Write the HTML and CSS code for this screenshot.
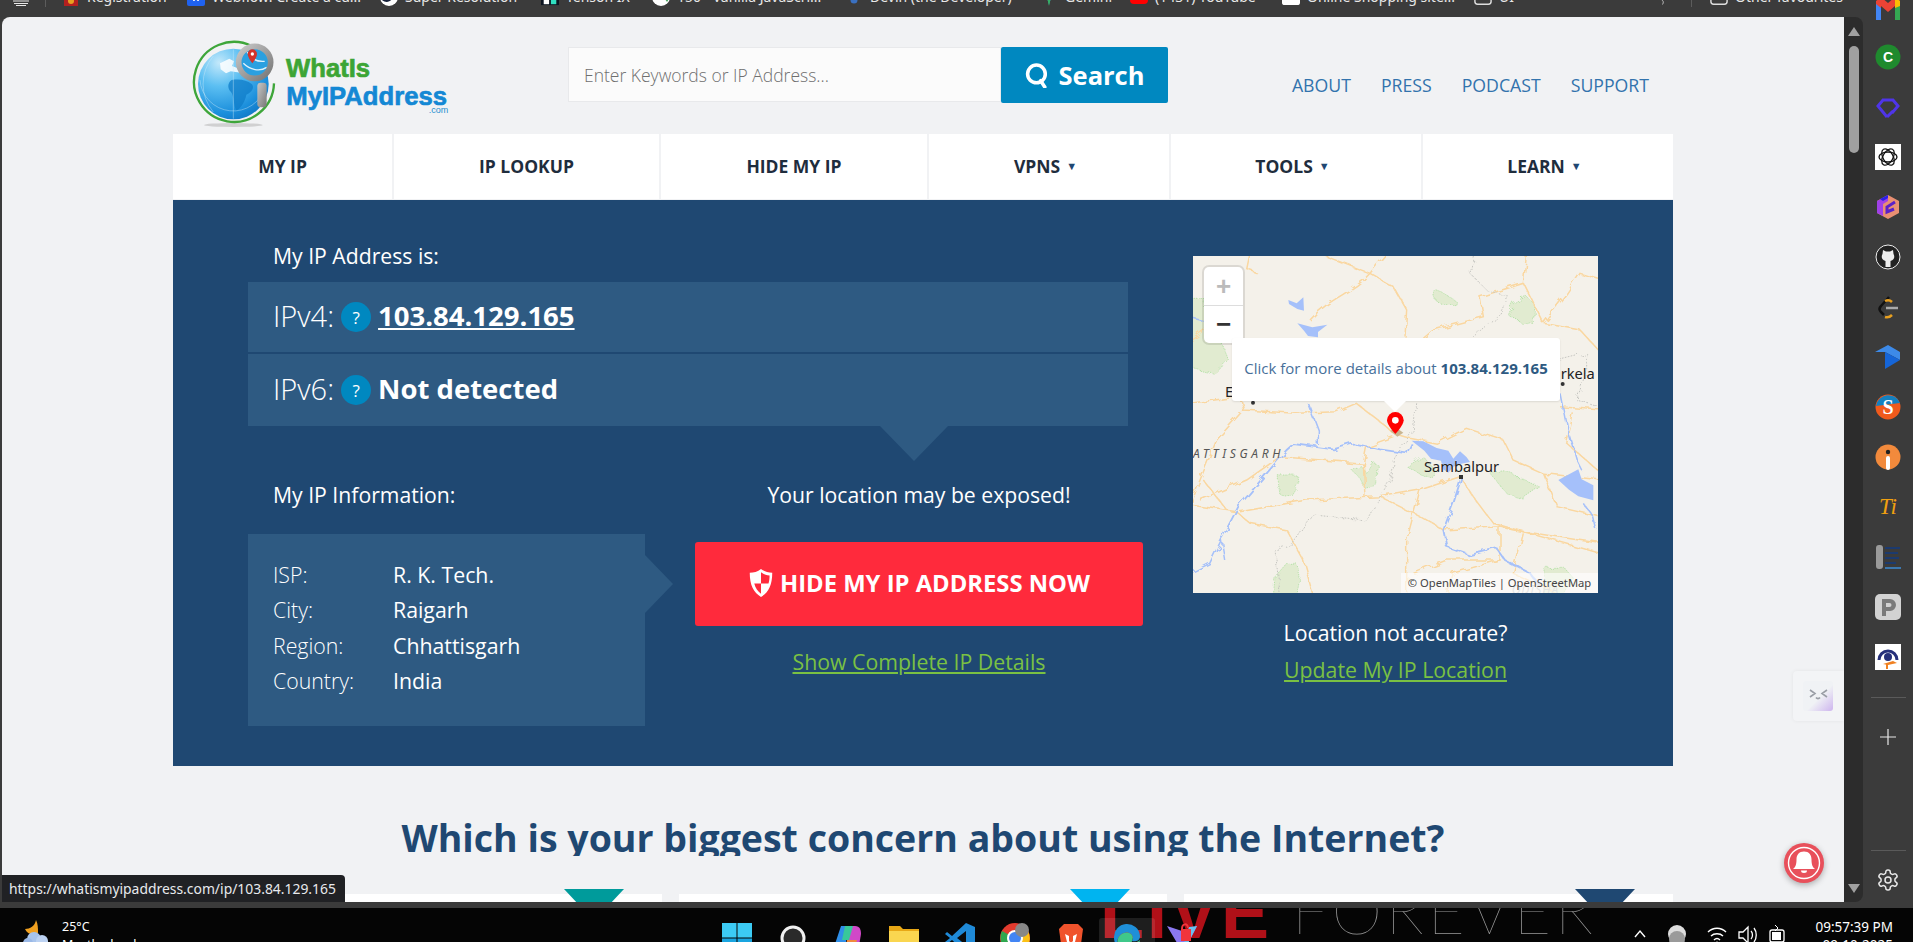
FILE: index.html
```html
<!DOCTYPE html>
<html lang="en">
<head>
<meta charset="utf-8">
<title>What Is My IP Address</title>
<link rel="stylesheet" href="styles.css">
</head>
<body>
<div class="browser">
  <div class="main">
    <div class="bookmarks">
      <svg class="bm-menu" viewBox="0 0 16 6"><path d="M0 1h16M1 3.500h14M3 5.500h10" stroke="#e8e8e8" stroke-width="1.200" fill="none"/></svg>
      <span class="bm-sep"></span>
      <div class="bm"><svg class="bm-icon" viewBox="0 0 18 18"><rect x="2" width="14" height="18" fill="#b3201f"/><circle cx="9" cy="13" r="3" fill="#e8a020"/></svg><span>Registration</span></div>
      <div class="bm"><svg class="bm-icon" viewBox="0 0 18 18"><rect width="18" height="18" rx="2" fill="#1f62f0"/><path d="M4 8l3 5 2-4 2 4 3-5" stroke="#fff" fill="none"/></svg><span>Webflow: Create a cu...</span></div>
      <div class="bm"><svg class="bm-icon" viewBox="0 0 18 18"><circle cx="9" cy="9" r="9" fill="#fff"/><path d="M3 11c4 3 8 1 9-4" stroke="#16213a" stroke-width="3" fill="none"/></svg><span>Super Resolution</span></div>
      <div class="bm"><svg class="bm-icon" viewBox="0 0 20 18"><rect width="20" height="18" fill="#0b1420"/><rect x="3" y="8" width="6" height="9" fill="#fff"/><rect x="11" y="8" width="6" height="9" fill="#30e0c0"/></svg><span>Tenson IX</span></div>
      <div class="bm"><svg class="bm-icon" viewBox="0 0 18 18"><circle cx="9" cy="9" r="9" fill="#fff"/><path d="M6 0l9 14 3-5V0z" fill="#3f9f58"/></svg><span>150+ Vanilla JavaScri...</span></div>
      <div class="bm"><svg class="bm-icon" viewBox="0 0 18 18"><circle cx="5" cy="5" r="3" fill="#4f8fd0"/><circle cx="13" cy="5" r="3" fill="#6aa88a"/><circle cx="9" cy="12" r="3.500" fill="#3a70c0"/></svg><span>Devin (the Developer)</span></div>
      <div class="bm"><svg class="bm-icon" viewBox="0 0 18 18"><path d="M9 0c1 5 3 7 7 8-4 1-6 3-7 9-1-6-3-8-7-9 4-1 6-3 7-8z" fill="#3f9fd0"/><path d="M9 9l2 0-2 9-2-9z" fill="#36b060"/></svg><span>Gemini</span></div>
      <div class="bm"><svg class="bm-icon" viewBox="0 0 18 18"><rect y="2" width="18" height="14" rx="4" fill="#f00"/></svg><span>(1431) YouTube</span></div>
      <div class="bm"><svg class="bm-icon" viewBox="0 0 20 18"><rect width="20" height="18" rx="3" fill="#fff"/><path d="M4 9c3 3 9 3 12 0" stroke="#f08a10" stroke-width="2" fill="none"/></svg><span>Online Shopping site...</span></div>
      <div class="bm bm-ui"><svg class="bm-icon" viewBox="0 0 20 18"><path d="M1 0v14a3 3 0 0 0 3 3h12a3 3 0 0 0 3-3V0" stroke="#ddd" stroke-width="1.600" fill="none"/></svg><span>UI</span></div>
      <svg class="bm-chev" viewBox="0 0 8 8"><path d="M1 0c2 1 3 3 1 6" stroke="#ddd" fill="none"/></svg>
      <span class="bm-sep bm-sep-end"></span>
      <div class="bm"><svg class="bm-icon" viewBox="0 0 20 18"><path d="M1 0v14a3 3 0 0 0 3 3h12a3 3 0 0 0 3-3V0" stroke="#ddd" stroke-width="1.600" fill="none"/></svg><span>Other favourites</span></div>
    </div>
    <div class="viewport">
      <div class="page">
        <div class="container">
          <header class="site-header">
            <svg class="logo" viewBox="0 0 900 360" role="img" aria-label="WhatIsMyIPAddress.com">
              <defs>
                <radialGradient id="globeFill" cx="0.3" cy="0.2" r="0.95"><stop offset="0" stop-color="#c4e9fb"/><stop offset="0.35" stop-color="#5cbff2"/><stop offset="0.75" stop-color="#1b8fdc"/><stop offset="1" stop-color="#0d6ebd"/></radialGradient>
                <linearGradient id="ringFill" x1="0" y1="0" x2="1" y2="1"><stop offset="0" stop-color="#c8c8c8"/><stop offset="1" stop-color="#777"/></linearGradient>
              </defs>
              <ellipse cx="190" cy="315" rx="88" ry="6" fill="#b5b5b5" opacity="0.55"/>
              <path d="M245 78A120 120 0 1 0 312 190" fill="none" stroke="#3ea63a" stroke-width="7"/>
              <circle cx="190" cy="192" r="106" fill="url(#globeFill)"/>
              <path d="M150 130l28-14 14 8-6 14 22 8 4 12-30-4-14 6-16-12z" fill="#fff" opacity="0.85"/>
              <path d="M185 180c25-4 45 0 60 12 10 10 0 26-16 32-4 22-18 42-30 48-10-20-6-42-16-56-10-10-12-26 2-36z" fill="#0f7cc8" opacity="0.75"/>
              <path d="M90 180a100 100 0 0 0 196 20M130 108a130 130 0 0 0 0 168M190 88v208" stroke="#d5eefa" stroke-width="2" fill="none" opacity="0.6"/>
              <circle cx="254" cy="127" r="42" fill="#2ba0e0"/>
              <path d="M220 130c20 20 50 26 70 12M232 96c10 20 30 30 52 28" stroke="#dff2fc" stroke-width="4" fill="none"/>
              <circle cx="254" cy="127" r="48" fill="none" stroke="url(#ringFill)" stroke-width="17"/>
              <rect x="262" y="188" width="28" height="74" rx="10" fill="url(#ringFill)"/>
              <path d="M247 88a14 14 0 0 1 14 14c0 10-14 28-14 28s-14-18-14-28a14 14 0 0 1 14-14z" fill="#d3332b"/>
              <circle cx="247" cy="102" r="5" fill="#fff"/>
              <text class="logo-word logo-green" x="348" y="172">WhatIs</text>
              <text class="logo-word logo-blue" x="349" y="255">MyIPAddress</text>
              <text class="logo-com" x="835" y="279" text-anchor="end">.com</text>
            </svg>
            <form class="search">
              <div class="search-input">Enter Keywords or IP Address...</div>
              <div class="search-btn">
                <svg class="search-glass" viewBox="0 0 24 24"><circle cx="11" cy="10.500" r="8.500" fill="none" stroke="#fff" stroke-width="3.400"/><path d="M15 17l4 6" stroke="#fff" stroke-width="3.400" stroke-linecap="round"/></svg>
                <span>Search</span>
              </div>
            </form>
            <nav class="top-links">
              <a>ABOUT</a><a>PRESS</a><a>PODCAST</a><a>SUPPORT</a>
            </nav>
          </header>
          <nav class="main-nav">
            <a class="nav-myip">MY IP</a>
            <a class="nav-lookup">IP LOOKUP</a>
            <a class="nav-hide">HIDE MY IP</a>
            <a class="nav-vpns">VPNS<i class="caret">▼</i></a>
            <a class="nav-tools">TOOLS<i class="caret">▼</i></a>
            <a class="nav-learn">LEARN<i class="caret">▼</i></a>
          </nav>
          <section class="hero">
            <div class="hero-left">
              <div class="hero-title">My IP Address is:</div>
              <div class="ip-panel">
                <div class="ip-row">
                  <span class="ip-label">IPv4:</span><span class="qmark">?</span><a class="ip-value ip-link">103.84.129.165</a>
                </div>
                <div class="ip-row ip-row-last">
                  <span class="ip-label">IPv6:</span><span class="qmark">?</span><span class="ip-value">Not detected</span>
                </div>
              </div>
              <div class="hero-lower">
                <div class="info-col">
                  <div class="hero-title">My IP Information:</div>
                  <dl class="info-box">
                    <dt>ISP:</dt><dd>R. K. Tech.</dd>
                    <dt>City:</dt><dd>Raigarh</dd>
                    <dt>Region:</dt><dd>Chhattisgarh</dd>
                    <dt>Country:</dt><dd>India</dd>
                  </dl>
                </div>
                <div class="cta-col">
                  <div class="hero-title hero-title-center">Your location may be exposed!</div>
                  <a class="hide-btn">
                    <svg class="shield" viewBox="0 0 24 28"><path d="M12 1c3 2.500 7 3.500 10.500 3.500C22.500 16 19 23 12 27 5 23 1.500 16 1.500 4.500 5 4.500 9 3.500 12 1z" fill="#fff"/><path d="M12 4c2.500 1.800 5 2.600 8 3 0 3-.4 5.500-1 7.500h-7zM12 14.500v9.500c-3-2-5.200-5.300-6.300-9.500z" fill="#ff2a3c"/></svg>
                    <span>HIDE MY IP ADDRESS NOW</span>
                  </a>
                  <a class="green-link details-link">Show Complete IP Details</a>
                </div>
              </div>
            </div>
            <div class="hero-right">
              <div class="map">
                <svg class="map-art" viewBox="39 48 1215 1011" aria-hidden="true">
                  <defs>
                    <filter id="wiggle" x="-5%" y="-5%" width="110%" height="110%"><feTurbulence type="fractalNoise" baseFrequency="0.035" numOctaves="2" seed="4"/><feDisplacementMap in="SourceGraphic" scale="22"/></filter>
                  </defs>
                  <rect x="39" y="48" width="1215" height="1011" fill="#f4f1ea"/>
                  <g class="m-green" filter="url(#wiggle)">
                    <path d="M30 178h45l5 80 45 50 20 50-40 45-75-20z"/>
                    <path d="M765 150l25 10 40 25-5 15-30-10-30-10z"/>
                    <path d="M1000 190l35-25 30 30-5 50-30 10-15-15-30-15z"/>
                    <path d="M295 705l55 0 5 25-25 40-30-5-5-35z"/>
                    <path d="M515 690l30-10 15 20 20-30 15 5-5 60-35 10-15-30z"/>
                    <path d="M680 680l50-30 45 50-40 10z"/>
                    <path d="M930 700l50-5 100 45-50 35-50-15z"/>
                    <path d="M285 1010l35-40 30 0 10 40-10 59h-70z"/>
                    <path d="M1095 985l60 0 25 30-30 54h-55z"/>
                  </g>
                  <g class="m-road" filter="url(#wiggle)">
                    <path d="M440 50l130 50 70 40 40 70-5 80"/>
                    <path d="M570 100c-50 60-120 70-180 140"/>
                    <path d="M620 40l-50 60"/>
                    <path d="M1040 40l-10 90-130 40 10 60-150 40-30 25"/>
                    <path d="M1030 130l60 120 70-90 40-60 64 20"/>
                    <path d="M1090 250l110 20 64 70"/>
                    <path d="M210 40l-10 48 30 10"/>
                    <path d="M30 490l149-20 10 40 160 10 120-5 60-25 90 70 20 20 50 15 80 15 90-45 110 35 30 60 90 40 174 20"/>
                    <path d="M190 510l-80 90-50 120-30 80"/>
                    <path d="M30 795l140 20 40 35 110 20 50 90 30 109"/>
                    <path d="M300 650l250 20 10-50 80-30"/>
                    <path d="M60 780l140-60 100-70"/>
                    <path d="M180 815l200-35 220-10 120-20 120-40 40 60 60 80 320 90"/>
                    <path d="M720 750l-40 150v169"/>
                    <path d="M600 770l120 60 70 40 170-10 40 10 260 40"/>
                    <path d="M550 670l5 100"/>
                    <path d="M960 860v100H800l-100 40"/>
                    <path d="M1140 500l124 10M1180 520l-20 90 104 90"/>
                    <path d="M800 1069l20-70 140-40"/>
                    <path d="M30 300l70-50 70 50"/>
                    <path d="M70 720l70 90M1090 700l40 100 130 30"/>
                    <path d="M1030 880l-30 120 130 60"/>
                  </g>
                  <g class="m-border" filter="url(#wiggle)">
                    <path d="M880 48l-10 52 50 50 65 20-25 50-80 70"/>
                    <path d="M710 490l-10 80-60 90-10 60-30 50-40 70-160-15-60 85-55 20 15 129"/>
                    <path d="M1140 360l80-20 0 50-30 90 64 20"/>
                  </g>
                  <g class="m-river" filter="url(#wiggle)">
                    <path d="M30 1000l59-30 35-70 10 60"/>
                    <path class="m-river-wide" d="M125 895l50-95 85-100 60-70 20-18 60 8 60 8 60-18 80 18 80 12 15-30"/>
                    <path class="m-river-wide" d="M845 710l-25 80-30 80 10 50 70 25 80-20 25 35 75 40 30 40"/>
                    <path d="M385 490l30 80v45"/>
                    <path d="M1140 460l20 100 30 100 15 30M1210 790l30 40 10 40"/>
                    <path d="M30 230l40 10"/>
                  </g>
                  <g class="m-lake">
                    <path d="M325 180l25 10 20-18 2 40-20-5-25-15z"/>
                    <path d="M352 250l45 12 45-8-28 22 0 16-30-4-12-16z"/>
                    <path d="M695 602l35 2 40 20 35 8 15 24 20-22 20 18 10 14-30 6-20 8-15 18-16-10-6-26-30-6-20-24z"/>
                    <path d="M1135 720l60-32 10 30 35 18 0 45-45-12-28-20z"/>
                  </g>
                  <path d="M630 572l20-8 20 14-18 12z" fill="#c9b590"/>
                  <text class="m-city" x="135" y="471">E</text>
                  <text class="m-city" x="1142" y="416">rkela</text>
                  <text class="m-city" x="732" y="695">Sambalpur</text>
                  <text class="m-state" x="39" y="655">ATTISGARH</text>
                  <text class="m-state m-state-faded" x="995" y="1062">ODISHA</text>
                  <circle cx="219" cy="488" r="6" fill="#333"/>
                  <circle cx="1148" cy="432" r="6" fill="#333"/>
                  <rect x="837" y="705" width="12" height="12" fill="#333"/>
                  <path d="M646 516a25 25 0 0 1 25 25c0 15-25 41-25 41s-25-26-25-41a25 25 0 0 1 25-25z" fill="#f00"/>
                  <circle cx="646" cy="541" r="10" fill="#fff"/>
                </svg>
                <div class="zoom-ctl">
                  <span class="zoom-plus">+</span>
                  <span class="zoom-minus">−</span>
                </div>
                <div class="popup">Click for more details about&nbsp;<b>103.84.129.165</b></div>
                <div class="attrib">© OpenMapTiles | OpenStreetMap</div>
              </div>
              <div class="loc-note">Location not accurate?</div>
              <a class="green-link loc-link">Update My IP Location</a>
            </div>
          </section>
          <h2 class="concern">Which is your biggest concern about using the Internet?</h2>
          <div class="cards">
            <div class="card"><span class="card-tri tri-teal"></span></div>
            <div class="card"><span class="card-tri tri-sky"></span></div>
            <div class="card"><span class="card-tri tri-navy"></span></div>
          </div>
        </div>
        <div class="status">https://whatismyipaddress.com/ip/103.84.129.165</div>
        <div class="side-widget"><svg class="widget-face" viewBox="0 0 30 30"><defs><linearGradient id="faceBg" x1="0" y1="0" x2="1" y2="1"><stop offset="0.55" stop-color="#f0f2f5"/><stop offset="1" stop-color="#cdb4ee"/></linearGradient></defs><rect width="30" height="30" rx="3" fill="url(#faceBg)"/><path d="M7 9l5 3.500-5 3.500M24 9l-5 3.500 5 3.500M13 16.500c1 1.500 3 1.500 4 0" stroke="#9a9ea6" stroke-width="1.600" fill="none"/></svg></div>
        <div class="bell">
          <svg viewBox="0 0 40 40"><circle cx="20" cy="20" r="15.500" fill="none" stroke="#fff" stroke-width="1.400"/><path d="M20 8.500c-5 0-7.500 3.500-7.500 8 0 5-1 7.500-3.500 9.500h22c-2.500-2-3.500-4.500-3.500-9.500 0-4.500-2.500-8-7.500-8z" fill="#fff"/><path d="M17 27.500a3 2.500 0 0 0 6 0z" fill="#fff"/></svg>
        </div>
      </div>
      <div class="scrollbar">
        <span class="sb-up"></span>
        <span class="sb-thumb"></span>
        <span class="sb-down"></span>
      </div>
    </div>
  </div>
  <aside class="sidebar">
    <div class="side-slot side-first"><svg class="s26" viewBox="0 0 26 26"><path d="M1 7v19h5V12l7 6 7-6v14h5V7l-5-4-7 6-7-6z" fill="#ea4335"/><path d="M1 10v16h5V14z" fill="#4285f4"/><path d="M25 10v16h-5V14z" fill="#34a853"/><path d="M20 3l5 4v5l-5 2z" fill="#fbbc04"/></svg></div>
    <div class="side-slot"><svg class="s26" viewBox="0 0 26 26"><circle cx="13" cy="13" r="12.500" fill="#1f8a2e"/><text class="side-c" x="13" y="18" text-anchor="middle">C</text></svg></div>
    <div class="side-slot"><svg class="s26" viewBox="0 0 26 26"><path d="M12 23l5-5-1-1M12 23L3 12l5-6h10l5 6-6 7" fill="none" stroke="#4f35e8" stroke-width="3"/></svg></div>
    <div class="side-slot"><svg class="s26" viewBox="0 0 26 26"><rect width="26" height="26" fill="#fff"/><g fill="none" stroke="#111" stroke-width="1.300"><ellipse cx="13" cy="13" rx="9" ry="5"/><ellipse cx="13" cy="13" rx="9" ry="5" transform="rotate(60 13 13)"/><ellipse cx="13" cy="13" rx="9" ry="5" transform="rotate(120 13 13)"/></g></svg></div>
    <div class="side-slot"><svg class="s26" viewBox="0 0 26 26"><path d="M13 1l11 6v12l-11 6-11-6V7z" fill="#e88f72"/><path d="M13 1l-11 6v12l6 3V10l5-3z" fill="#a040e8"/><path d="M13 1L5 5l3 2 5-3z" fill="#2a20e8"/><path d="M20 8l-8 5v5l7-3" fill="none" stroke="#5a20c8" stroke-width="3"/></svg></div>
    <div class="side-slot"><svg class="s26" viewBox="0 0 26 26"><circle cx="13" cy="13" r="12" fill="#222" stroke="#eee" stroke-width="1"/><path d="M8 6l3 1.500h4L18 6l.500 4c1.500 2.500 1 6-3 7v6h-5v-6c-4-1-4.500-4.500-3-7z" fill="#eee"/></svg></div>
    <div class="side-slot"><svg class="s26" viewBox="0 0 26 26"><path d="M14 3L6 12c-2 2-2 4 0 6l3 3" fill="none" stroke="#111" stroke-width="2.500"/><path d="M10 23c3 1 5 0 7-2M10 7c2-1 5-1 7 1" fill="none" stroke="#e8a020" stroke-width="2.500"/><path d="M11 14h12" stroke="#aaa" stroke-width="2.500"/></svg></div>
    <div class="side-slot"><svg class="s26" viewBox="0 0 26 26"><path d="M0 8l13-7 12 7v8L10 8z" fill="#3d8ae8"/><path d="M10 8l15 8-15 9z" fill="#1565d8"/></svg></div>
    <div class="side-slot"><svg class="s26" viewBox="0 0 26 26"><circle cx="13" cy="13" r="12.500" fill="#f05a1c"/><path d="M1 12a12.500 12.500 0 0 1 24-3z" fill="#1480c0"/><text class="side-s" x="13" y="20" text-anchor="middle">S</text></svg></div>
    <div class="side-slot"><svg class="s26" viewBox="0 0 26 26"><circle cx="13" cy="13" r="12.500" fill="#f28a3c"/><circle cx="13" cy="8" r="2.200" fill="#222"/><rect x="11" y="12" width="4" height="14" rx="2" fill="#fff"/></svg></div>
    <div class="side-slot"><span class="side-ti">Ti</span></div>
    <div class="side-slot"><svg class="s26" viewBox="0 0 26 26"><rect x="1" y="1" width="7" height="24" rx="3" fill="#9a9a9a"/><g fill="#1c3a6e"><rect x="10" y="3" width="15" height="2"/><rect x="10" y="8" width="13" height="2"/><rect x="10" y="13" width="14" height="2"/><rect x="10" y="18" width="11" height="2"/></g><rect x="10" y="23" width="16" height="2" fill="#3c78b0"/></svg></div>
    <div class="side-slot"><svg class="s26" viewBox="0 0 26 26"><rect width="26" height="26" rx="5" fill="#d2d2d2"/><path d="M7 22V5h8a6 6 0 0 1 0 12h-4v5zM11 9v4h3.500a2 2 0 0 0 0-4z" fill="#7a7a7a" fill-rule="evenodd"/></svg></div>
    <div class="side-slot"><svg class="s26" viewBox="0 0 26 26"><rect width="26" height="26" fill="#fff"/><path d="M4 16a9 9 0 0 1 18 0" fill="none" stroke="#26307a" stroke-width="3"/><circle cx="13" cy="13" r="4" fill="#26307a"/><path d="M8 20l10-3 4 2-9 2z" fill="#f08020"/><path d="M12 19v6" stroke="#f08020" stroke-width="2"/></svg></div>
    <hr class="side-rule side-rule-top">
    <div class="side-plus"><svg viewBox="0 0 16 16"><path d="M8 0v16M0 8h16" stroke="#e8e8e8" stroke-width="1.200"/></svg></div>
    <hr class="side-rule side-rule-bottom">
    <div class="side-gear"><svg viewBox="0 0 24 24" fill="none" stroke="#e8e8e8" stroke-width="1.500"><path d="M12.220 2h-.44a2 2 0 0 0-2 2v.18a2 2 0 0 1-1 1.730l-.43.25a2 2 0 0 1-2 0l-.15-.08a2 2 0 0 0-2.730.73l-.22.38a2 2 0 0 0 .73 2.730l.15.1a2 2 0 0 1 1 1.720v.51a2 2 0 0 1-1 1.740l-.15.09a2 2 0 0 0-.73 2.730l.22.38a2 2 0 0 0 2.730.73l.15-.08a2 2 0 0 1 2 0l.43.25a2 2 0 0 1 1 1.730V20a2 2 0 0 0 2 2h.44a2 2 0 0 0 2-2v-.18a2 2 0 0 1 1-1.730l.43-.25a2 2 0 0 1 2 0l.15.08a2 2 0 0 0 2.730-.73l.22-.39a2 2 0 0 0-.73-2.730l-.15-.08a2 2 0 0 1-1-1.740v-.5a2 2 0 0 1 1-1.740l.15-.09a2 2 0 0 0 .73-2.730l-.22-.38a2 2 0 0 0-2.730-.73l-.15.08a2 2 0 0 1-2 0l-.43-.25a2 2 0 0 1-1-1.730V4a2 2 0 0 0-2-2z"/><circle cx="12" cy="12" r="3"/></svg></div>
  </aside>
</div>
<footer class="taskbar">
  <div class="wall-live">LIVE</div>
  <div class="wall-forever">FOREVER</div>
  <div class="weather">
    <svg class="weather-icon" viewBox="0 0 32 28"><path d="M16 0c-1 6-6 9-11 9 2 5 8 7 13 4 0-5 0-9-2-13z" fill="#f0a020"/><circle cx="14" cy="19" r="7" fill="#a8c4ec"/><circle cx="22" cy="21" r="6" fill="#bcd2f2"/><circle cx="8" cy="23" r="5" fill="#9ab8e6"/></svg>
    <div class="weather-text"><div>25°C</div><div>Mostly cloudy</div></div>
  </div>
  <div class="apps">
    <div class="app"><svg viewBox="0 0 30 30"><g fill="#3ccbf4"><rect width="14.500" height="14.500"/><rect x="15.500" width="14.500" height="14.500"/></g><g fill="#19a5e0"><rect y="15.500" width="14.500" height="14.500"/><rect x="15.500" y="15.500" width="14.500" height="14.500"/></g></svg></div>
    <div class="app"><svg viewBox="0 0 30 30"><circle cx="15" cy="15" r="11" fill="#2a2a2a" stroke="#f0f0f0" stroke-width="3"/></svg></div>
    <div class="app"><svg viewBox="0 0 30 30"><path d="M8 3h7l-3 24H4c-3 0-3-3-2-6z" fill="#2f8fe8"/><path d="M16 3h6c5 0 6 4 6 8l-2 12c-1 3-3 4-6 4h-6z" fill="#d048c8"/><path d="M12 3h8l-4 14h-7z" fill="#38c89a"/><path d="M14 17h10l-3 10h-9z" fill="#f08a3c"/></svg></div>
    <div class="app"><svg viewBox="0 0 30 30"><path d="M0 3h11l3 3h16v24H0z" fill="#e8a816"/><rect y="8" width="30" height="22" fill="#fad650"/></svg></div>
    <div class="app"><svg viewBox="0 0 30 30"><path d="M21 0l9 4v22l-9 4L7 17l-5 4-2-2 5-4-5-4 2-2 5 4z" fill="#1f8ad8"/><path d="M21 8v14l-9-7z" fill="#0b0b0b"/></svg></div>
    <div class="app"><svg viewBox="0 0 30 30"><circle cx="15" cy="15" r="15" fill="#e33b2e"/><path d="M15 15L2 8a15 15 0 0 0 9 21z" fill="#2fa84f"/><path d="M15 15l13-7a15 15 0 0 1-4 19l-9 3z" fill="#fbc116"/><circle cx="15" cy="15" r="7" fill="#4285f4" stroke="#fff" stroke-width="2"/><circle cx="22" cy="7" r="7" fill="#888"/></svg></div>
    <div class="app"><svg viewBox="0 0 30 30"><path d="M8 1h14l5 5-2 15-10 9-10-9L3 6z" fill="#f0532c"/><path d="M9 11l4 2v5l2 2 2-2v-5l4-2-2 8-4 4-4-4z" fill="#fff"/></svg></div>
    <div class="app app-active"><svg viewBox="0 0 30 30"><path d="M2 15a13 13 0 0 1 26-2c0 5-5 6-8 5 3-6-3-10-8-8-6 2-9 9-4 15C4 23 2 19 2 15z" fill="#1f8fd8"/><path d="M8 25c-5-6-2-13 4-15 5-2 11 2 8 8-1 2 3 3 8-1-1 8-8 13-14 12-3 0-5-2-6-4z" fill="#3fc88a"/></svg></div>
    <div class="app"><svg viewBox="0 0 30 30"><path d="M0 3l18 6 12-6-14 27z" fill="#8a78f0"/><path d="M22 4l8-1-14 27 2-16z" fill="#6ac0f0"/><rect x="14" y="6" width="10" height="12" fill="#f0343c"/><path d="M15 6c0-6 6-6 6-1" fill="none" stroke="#f0343c" stroke-width="2"/></svg></div>
  </div>
  <div class="tray">
    <svg class="tray-chev" viewBox="0 0 14 14"><path d="M2 10l5-6 5 6" fill="none" stroke="#fff" stroke-width="1.400"/></svg>
    <svg class="tray-cloud" viewBox="0 0 22 22"><circle cx="11" cy="9" r="9" fill="#ddd"/><path d="M3 14a8 8 0 0 1 16 0l-1 8H4z" fill="#9a9a9a"/></svg>
    <svg class="tray-icon" viewBox="0 0 20 20"><path d="M1 7c5-5 13-5 18 0M4 11c3-3 9-3 12 0M7 15c2-2 4-2 6 0" fill="none" stroke="#fff" stroke-width="1.400"/><circle cx="10" cy="18" r="1.400" fill="#fff"/></svg>
    <svg class="tray-icon" viewBox="0 0 20 20"><path d="M2 7h4l5-5v16l-5-5H2z" fill="none" stroke="#fff" stroke-width="1.300"/><path d="M14 6c2 2 2 6 0 8M17 3c3 4 3 10 0 14" fill="none" stroke="#fff" stroke-width="1.300"/></svg>
    <svg class="tray-icon" viewBox="0 0 20 20"><rect x="3" y="5" width="14" height="12" rx="2" fill="none" stroke="#fff" stroke-width="1.300"/><rect x="5" y="7" width="9" height="8" fill="#fff"/><path d="M8 0l3 3-3 3" fill="none" stroke="#fff"/></svg>
    <div class="clock"><div>09:57:39 PM</div><div>09-10-2025</div></div>
  </div>
</footer>
</body>
</html>
```
FILE: styles.css
```css
* { box-sizing: border-box; }
html, body { margin: 0; height: 942px; overflow: hidden; background: #000; }
body { font-family: "Open Sans", "Noto Sans", sans-serif; color: #fff; }
a { color: inherit; }

.browser { display: flex; height: 908px; background: #3b3b3b; }
.main { flex: 1; min-width: 0; display: flex; flex-direction: column; padding-bottom: 6px; }

/* bookmarks bar */
.bookmarks {
  height: 17px; flex: none; overflow: hidden;
  display: grid;
  grid-template-columns: 35px 17px 125px 193px 161px 111px 193px 195px 90px 152px 192px 186px 31px 19px 1fr;
  padding-left: 10px;
  font: 14px/18px "Noto Sans", sans-serif; color: #e8e8e8;
}
.bm { display: flex; gap: 7px; align-items: flex-start; margin-top: -12px; white-space: nowrap; }
.bm-icon { width: 18px; height: 18px; flex: none; }
.bm-menu { width: 18px; height: 6px; margin-left: 2px; }
.bm-sep { width: 1px; height: 7px; background: #5c5c5c; }
.bm-chev { width: 8px; height: 6px; }

/* viewport */
.viewport { flex: 1; min-height: 0; display: flex; padding-left: 2px; }
.page {
  flex: 1; min-width: 0; position: relative; overflow: hidden;
  background: #f1f2f4; border-radius: 8px 0 0 0;
}
.container { width: 1500px; margin: 0 auto; }

/* header */
.site-header { display: flex; align-items: flex-start; height: 117px; }
.logo { width: 300px; height: 120px; margin: 3px 0 0 -3px; flex: none; }
.logo-word { font: 700 77px "Liberation Sans", sans-serif; stroke-width: 2px; }
.logo-green { fill: #3ca535; stroke: #3ca535; }
.logo-blue { fill: #1488d4; stroke: #1488d4; }
.logo-com { font: 400 27px "Liberation Sans", sans-serif; fill: #1e8fd0; }
.search { display: flex; margin: 30px 0 0 98px; height: 56px; }
.search-input {
  width: 433px; height: 55px; background: #fbfbfb; border: 1px solid #e8e9eb;
  padding-left: 15px; font-size: 17.500px; line-height: 55px; font-weight: 300; color: #6f6f6f;
}
.search-btn {
  width: 167px; background: #0088c0; border-radius: 2px;
  display: flex; align-items: center; justify-content: center; gap: 9px;
  font-size: 25.500px; font-weight: 700; color: #fff;
}
.search-glass { width: 25px; height: 25px; }
.top-links { margin: 55px 24px 0 auto; display: flex; gap: 30px; font-size: 17.700px; line-height: 26px; color: #3273ad; }

/* main nav */
.main-nav { display: grid; grid-template-columns: 219px 265px 266px 240px 250px 250px; gap: 2px; height: 66px; }
.main-nav a {
  background: #fff; display: flex; align-items: center; justify-content: center;
  font-size: 17.500px; font-weight: 700; color: #1f2d3d; height: 65px; padding-bottom: 2px;
}
.caret { font-style: normal; font-size: 11px; color: #1f4872; margin: 0 7px 0 6px; }

/* hero */
.hero { background: #1f4872; height: 566px; display: flex; padding: 38px 0 0 75px; }
.hero-left { width: 895px; flex: none; }
.hero-title { font-size: 21.200px; line-height: 36px; padding-left: 25px; }
.hero-title-center { padding-left: 0; text-align: center; }
.ip-panel { width: 880px; margin-top: 8px; display: flex; flex-direction: column; gap: 2px; position: relative; }
.ip-row { height: 70px; background: #2e5a82; display: flex; align-items: center; padding-left: 25px; }
.ip-row-last { height: 72px; position: relative; }
.ip-row-last::after {
  content: ""; position: absolute; left: 632px; top: 100%;
  border-left: 34px solid transparent; border-right: 34px solid transparent; border-top: 35px solid #2e5a82;
}
.ip-label { font-size: 29px; font-weight: 300; margin-top: -3px; }
.qmark {
  width: 30px; height: 30px; border-radius: 50%; background: #0088c0; margin: 0 7px;
  display: flex; align-items: center; justify-content: center; font-size: 17px;
}
.ip-value { font-size: 27.500px; font-weight: 700; margin-top: -3px; }
.ip-link { text-decoration: underline; }
.hero-lower { display: flex; gap: 50px; margin-top: 51px; }
.info-col { width: 397px; }
.cta-col { width: 448px; }
.info-box {
  position: relative; margin: 21px 0 0; height: 192px; background: #2e5a82;
  padding: 23px 0 0 25px; display: grid; grid-template-columns: 120px 1fr; grid-auto-rows: 35.300px;
  align-items: center; font-size: 21.300px;
}
.info-box::after {
  content: ""; position: absolute; left: 100%; top: 21px;
  border-top: 29px solid transparent; border-bottom: 29px solid transparent; border-left: 28px solid #2e5a82;
}
.info-box dt { font-weight: 300; }
.info-box dd { margin: 0; }
.hide-btn {
  margin-top: 29px; height: 84px; background: #ff2a3c; border-radius: 3px; padding-bottom: 2px;
  display: flex; align-items: center; justify-content: center; gap: 6px;
  font-size: 23.800px; font-weight: 700;
}
.shield { width: 26px; height: 30px; }
.green-link { color: #7ac143; text-decoration: underline; font-size: 21.300px; line-height: 36px; display: block; text-align: center; }
.details-link { margin-top: 18px; }
.hero-right { width: 405px; margin: 18px 0 0 50px; flex: none; }
.map { position: relative; height: 337px; overflow: hidden; }
.map-art { display: block; width: 405px; height: 337px; }
.m-road path { fill: none; stroke: #fad7a0; stroke-width: 4.500; }
.m-river path { fill: none; stroke: #a5c0fa; stroke-width: 4.500; }
.m-river .m-river-wide { stroke-width: 5.500; }
.m-lake path { fill: #a5c0fa; }
.m-green path { fill: #e1ebd0; stroke: #9fdc93; stroke-width: 2; stroke-dasharray: 4 3; }
.m-border path { fill: none; stroke: #c5c5c0; stroke-width: 3; stroke-dasharray: 5 4; }
.m-city { font: 44px "Noto Sans", sans-serif; fill: #222; stroke: #f4f1ea; stroke-width: 1px; paint-order: stroke; }
.m-state { font: italic 36px "Noto Sans", sans-serif; letter-spacing: 11px; fill: #555; }
.m-state-faded { fill: #bbb; letter-spacing: 3px; }
.zoom-ctl {
  position: absolute; left: 11px; top: 11px; width: 39px; height: 76px; background: #fff;
  border-radius: 5px; box-shadow: 0 0 0 2px rgba(0,0,0,.1);
  display: flex; flex-direction: column;
}
.zoom-plus, .zoom-minus { flex: 1; display: flex; align-items: center; justify-content: center; font: 700 26px/1 "Liberation Sans", sans-serif; }
.zoom-plus { color: #bbb; border-bottom: 1px solid #ddd; }
.zoom-minus { color: #333; }
.popup {
  position: absolute; left: 39px; top: 82px; width: 328px; height: 63px; background: #fff;
  border-radius: 3px; box-shadow: 0 1px 2px rgba(0,0,0,.1);
  display: flex; align-items: center; justify-content: center; padding-bottom: 3px;
  font-size: 15px; color: #47709a; white-space: nowrap;
}
.popup b { color: #2e5a82; font-weight: 700; }
.popup::after {
  content: ""; position: absolute; left: 152px; top: 100%;
  border-left: 11px solid transparent; border-right: 11px solid transparent; border-top: 11px solid #fff;
}
.attrib {
  position: absolute; right: 0; bottom: 0; width: 197px; height: 20px; background: rgba(255,255,255,.6);
  font: 11.200px/20px "Noto Sans", sans-serif; color: #444; text-align: center; white-space: nowrap;
}
.loc-note { font-size: 21.300px; line-height: 36px; text-align: center; margin-top: 22px; }
.loc-link { margin-top: 1px; }

/* concern */
.concern {
  margin: 47px 0 0; height: 43px; overflow: hidden; text-align: center;
  font-size: 37.500px; line-height: 50px; font-weight: 700; color: #1f4872;
}
.cards { display: grid; grid-template-columns: repeat(3, 1fr); gap: 17px; margin-top: 38px; }
.card { background: #fff; height: 60px; position: relative; }
.card-tri {
  position: absolute; top: -5px; left: 421px; margin-left: -30px;
  border-left: 30px solid transparent; border-right: 30px solid transparent; border-top: 32px solid;
}
.tri-teal { border-top-color: #009b9b; }
.tri-sky { border-top-color: #00b4f0; }
.tri-navy { border-top-color: #1f4872; }

/* overlays on page */
.status {
  position: absolute; left: 0; bottom: 0; width: 343px; height: 27px; background: #202124;
  border-radius: 0 4px 0 0; padding-left: 7px;
  font: 13.900px/27px "Noto Sans", sans-serif; color: #e8eaed; white-space: nowrap;
}
.side-widget {
  position: absolute; right: 0; top: 654px; width: 51px; height: 50px; background: #f3f4f6;
  border-radius: 4px 0 0 4px; box-shadow: 0 0 4px rgba(0,0,0,.06); padding: 10px 0 0 10px;
}
.widget-face { width: 30px; height: 30px; display: block; }
.bell {
  position: absolute; right: 20px; top: 826px; width: 40px; height: 40px; border-radius: 50%;
  background: #e8505b; box-shadow: 0 2px 6px rgba(0,0,0,.3);
}
.bell svg { display: block; width: 40px; height: 40px; }

/* scrollbar */
.scrollbar {
  width: 19px; flex: none; background: #2c2c2c; border-radius: 0 8px 8px 0;
  display: flex; flex-direction: column; align-items: center; position: relative; padding-top: 10px;
}
.sb-up { border-left: 6px solid transparent; border-right: 6px solid transparent; border-bottom: 9px solid #a0a0a0; }
.sb-thumb { width: 10px; height: 107px; background: #a0a0a0; border-radius: 5px; margin-top: 10px; }
.sb-down { margin-top: auto; margin-bottom: 9px; border-left: 6px solid transparent; border-right: 6px solid transparent; border-top: 9px solid #a0a0a0; }

/* sidebar */
.sidebar { width: 50px; flex: none; overflow: hidden; display: flex; flex-direction: column; align-items: center; padding-bottom: 8px; }
.side-slot { height: 50px; flex: none; display: flex; align-items: center; justify-content: center; width: 100%; }
.side-first { margin-top: -18px; }
.s26 { width: 26px; height: 26px; display: block; }
.side-c { font: 700 14px "Liberation Sans", sans-serif; fill: #fff; }
.side-s { font: 700 20px "Liberation Serif", serif; fill: #fff; }
.side-ti { font: italic 400 23px "Liberation Serif", serif; color: #f0a010; }
.side-rule { width: 35px; height: 1px; border: 0; background: #5a5a5a; margin: 0; flex: none; }
.side-rule-top { margin-top: 15px; }
.side-plus { width: 16px; height: 16px; margin-top: 31px; flex: none; }
.side-plus svg, .side-gear svg { display: block; width: 100%; height: 100%; }
.side-rule-bottom { margin-top: auto; }
.side-gear { width: 24px; height: 24px; margin: 17px 0 8px; flex: none; }

/* taskbar */
.taskbar { position: relative; height: 34px; background: #050505; display: flex; overflow: hidden; }
.wall-live { position: absolute; left: 1100px; top: -31px; font: 900 72px/1 "Liberation Sans", sans-serif; letter-spacing: 3px; color: #b01018; }
.wall-forever { position: absolute; left: 1292px; top: -30px; font: 100 64px/1 "Lato", sans-serif; letter-spacing: 4px; color: #9a9a9a; }
.weather { width: 709px; flex: none; display: flex; gap: 10px; padding: 12px 0 0 20px; position: relative; }
.weather-icon { width: 32px; height: 28px; flex: none; margin-top: 0; }
.weather-text { font: 12.500px/18px "Noto Sans", sans-serif; color: #fff; white-space: nowrap; margin-top: -2px; }
.apps { display: flex; position: relative; padding-top: 15px; }
.app { width: 55.700px; flex: none; display: flex; justify-content: center; }
.app svg { width: 30px; height: 30px; display: block; flex: none; }
.app-active { background: rgba(255,255,255,.1); margin-top: -5px; padding-top: 5px; border-radius: 3px 3px 0 0; }
.tray { margin-left: auto; position: relative; display: flex; align-items: flex-start; padding: 0 20px 0 0; }
.tray svg { flex: none; }
.tray-chev { width: 14px; height: 14px; margin: 19px 19px 0 0; }
.tray-cloud { width: 22px; height: 22px; margin: 17px 19px 0 0; }
.tray-icon { width: 20px; height: 20px; margin: 17px 10px 0 0; }
.clock { font: 13.500px/18px "Noto Sans", sans-serif; padding: 10px 0 0 19px; text-align: right; white-space: nowrap; }
```
